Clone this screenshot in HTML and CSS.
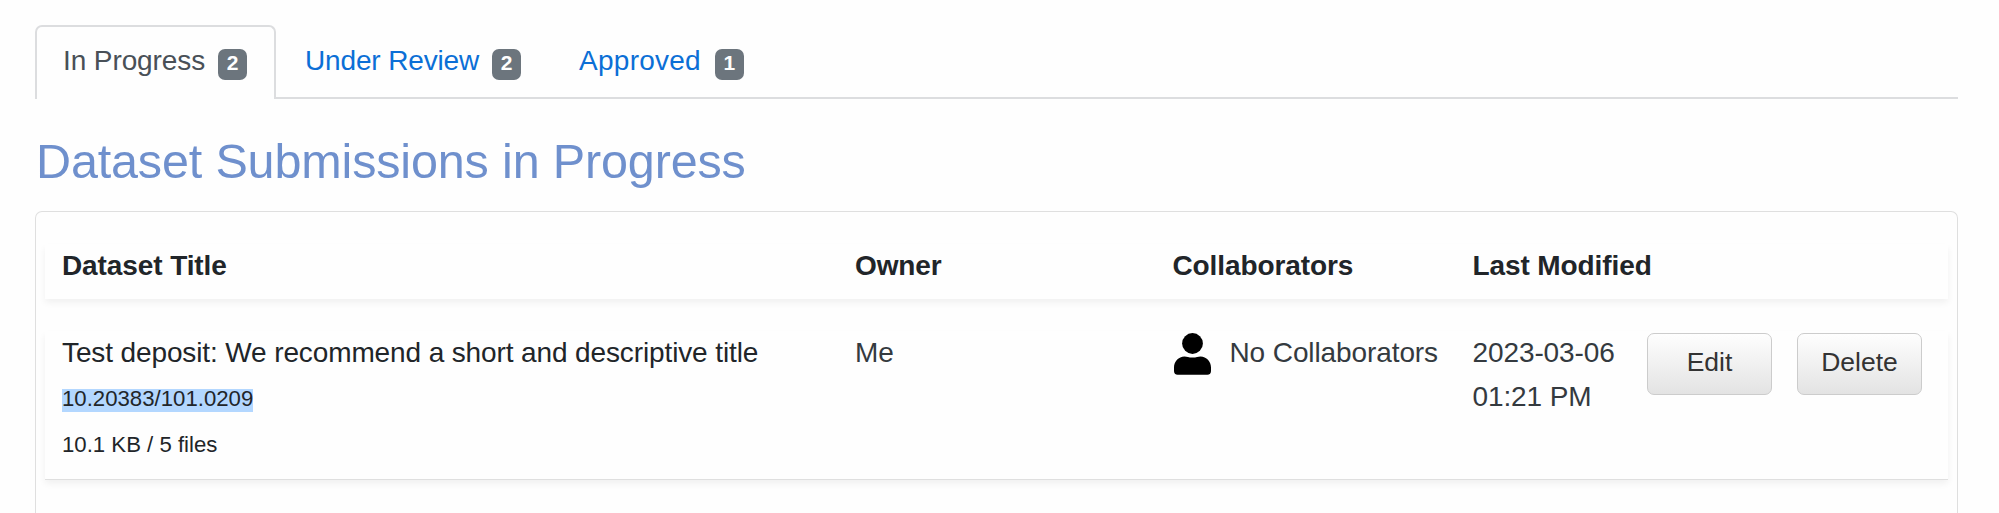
FILE: index.html
```html
<!DOCTYPE html>
<html lang="en">
<head>
<meta charset="utf-8">
<title>Dataset Submissions</title>
<link rel="stylesheet" href="styles.css">
</head>
<body>
<nav class="tabs">
  <a class="tab active"><span>In Progress</span><span class="badge">2</span></a>
  <a class="tab review"><span>Under Review</span><span class="badge">2</span></a>
  <a class="tab approved"><span>Approved</span><span class="badge">1</span></a>
</nav>
<h1 class="heading">Dataset Submissions in Progress</h1>
<section class="card">
  <div class="row head">
    <div>Dataset Title</div>
    <div>Owner</div>
    <div>Collaborators</div>
    <div>Last Modified</div>
  </div>
  <div class="row item">
    <div>
      <div class="title">Test deposit: We recommend a short and descriptive title</div>
      <div class="meta"><span class="selected">10.20383/101.0209</span></div>
      <div class="meta">10.1 KB / 5 files</div>
    </div>
    <div class="light">Me</div>
    <div class="people light">
      <svg class="person" viewBox="0 0 37 42" width="37" height="42"><circle cx="18.5" cy="10.5" r="10.4"/><path d="M10.5 23.5C13 23.5 14.5 24.6 18.5 24.6S24 23.5 26.500 23.500C32.500 23.500 37 28.500 37 34.500V38Q37 41.700 33.300 41.700H3.700Q0 41.700 0 38V34.500C0 28.500 4.500 23.500 10.500 23.500Z"/></svg>
      <span>No Collaborators</span>
    </div>
    <div class="light">2023-03-06<br>01:21 PM</div>
    <div class="actions"><button class="btn">Edit</button><button class="btn">Delete</button></div>
  </div>
</section>
</body>
</html>
```
FILE: styles.css
```css
* { box-sizing: border-box; }
html { height: 100%; overflow: hidden; }
body {
  display: flex;
  flex-direction: column;
  height: 100%;
  margin: 0;
  padding: 25px 41px 0 35px;
  overflow: hidden;
  background: #fefefe;
  color: #212529;
  font: 28px/45px "Liberation Sans", Arial, sans-serif;
  white-space: nowrap;
}
.tabs {
  display: flex;
  flex: none;
  height: 74px;
  border-bottom: 2px solid #dcdddf;
}
.tab {
  display: flex;
  align-items: flex-start;
  height: 74px;
  padding: 11px 26px 0;
  border: 2px solid transparent;
  border-bottom: 0;
  color: #0b6fd6;
}
.active {
  width: 241px;
  border-color: #dcdddf;
  border-radius: 7px 7px 0 0;
  background: #fefefe;
  color: #495057;
  letter-spacing: -0.1px;
}
.review { padding-left: 27px; letter-spacing: -0.15px; }
.approved { padding-left: 28px; letter-spacing: 0.25px; }
.badge {
  flex: none;
  width: 29px;
  height: 31px;
  margin: 11px 0 0 13px;
  border-radius: 7px;
  background: #6c757d;
  color: #fefefe;
  font-size: 21px;
  font-weight: bold;
  line-height: 28px;
  letter-spacing: 0;
  text-align: center;
}
.approved .badge { margin-left: 14px; }
.heading {
  flex: none;
  margin: 32px 0 0 1px;
  color: #6f90cd;
  font-size: 48.5px;
  font-weight: normal;
  line-height: 60px;
  letter-spacing: -0.15px;
}
.card {
  flex: 1;
  min-height: 0;
  margin-top: 20px;
  padding: 32px 9px 0;
  border: 1px solid #dfdfdf;
  border-bottom: 0;
  border-radius: 7px 7px 0 0;
}
.row {
  display: grid;
  grid-template-columns: 793px 317.5px 300px 174.5px 1fr;
  padding-left: 17px;
  background: #fefefe;
  box-shadow: 0 3.5px 7px rgba(0, 0, 0, 0.06);
}
.head { height: 55px; font-weight: bold; line-height: 43px; letter-spacing: -0.1px; }
.item { height: 149px; margin-top: 32px; border-bottom: 1px solid #dfdfdf; line-height: 44px; }
.light { color: #343a3f; letter-spacing: -0.1px; }
.title { letter-spacing: -0.12px; }
.meta { height: 46px; font-size: 22.2px; line-height: 48px; }
.selected { display: inline-block; height: 23px; background: #b3d7ff; line-height: 20px; }
.people { display: flex; gap: 19px; }
.person { display: block; margin: 2px 0 0 1px; fill: #000; }
.actions { display: flex; gap: 25px; padding-top: 2px; }
.btn {
  width: 125px;
  height: 62px;
  padding: 0 0 4px;
  border: 1px solid #ccc;
  border-radius: 7px;
  background: linear-gradient(#fefefe, #e3e3e3);
  color: #333;
  font: 26.5px "Liberation Sans", Arial, sans-serif;
}
```
